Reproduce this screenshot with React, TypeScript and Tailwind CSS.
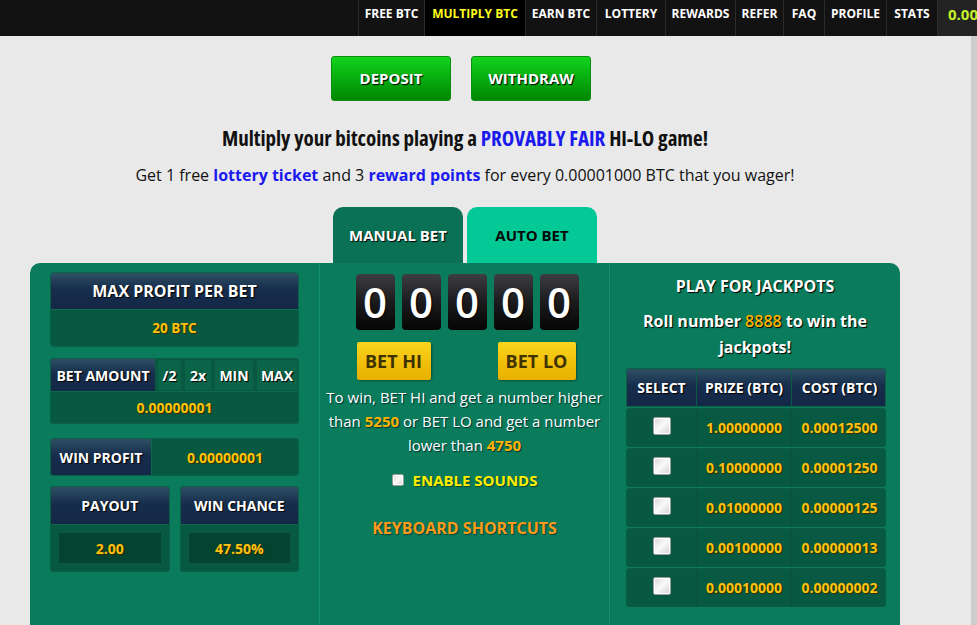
import React from "react";

const navItems = [
  { label: "FREE BTC", w: "w-[66px]", active: false },
  { label: "MULTIPLY BTC", w: "w-[101px]", active: true },
  { label: "EARN BTC", w: "w-[71px]", active: false },
  { label: "LOTTERY", w: "w-[69px]", active: false },
  { label: "REWARDS", w: "w-[70px]", active: false },
  { label: "REFER", w: "w-[48px]", active: false },
  { label: "FAQ", w: "w-[41px]", active: false },
  { label: "PROFILE", w: "w-[62px]", active: false },
  { label: "STATS", w: "w-[51px]", active: false },
];

const jackpots = [
  { prize: "1.00000000", cost: "0.00012500" },
  { prize: "0.10000000", cost: "0.00001250" },
  { prize: "0.01000000", cost: "0.00000125" },
  { prize: "0.00100000", cost: "0.00000013" },
  { prize: "0.00010000", cost: "0.00000002" },
];

const navy =
  "bg-[linear-gradient(to_bottom,#2e5064,#172d4c_45%,#142847)] text-white font-bold [text-shadow:1px_1px_1px_#000]";
const gold = "text-[#ffc20e] font-bold [text-shadow:1px_1px_1px_#3a2a00]";

const TopNav = () => (
  <nav className="flex h-[36px] bg-[#121212] font-['Open_Sans',sans-serif] text-[12px] font-bold">
    <div className="flex-1" />
    {navItems.map((item) => (
      <div
        key={item.label}
        className={`${item.w} flex items-start justify-center border-l border-[#2c2c2c] pt-[5px] ${
          item.active ? "bg-black text-[#ffff1a]" : "text-white"
        }`}
      >
        {item.label}
      </div>
    ))}
    <div className="w-[40px] overflow-hidden whitespace-nowrap border-l border-[#2c2c2c] bg-[#232323] pl-[10px] pt-[3px] text-[15px] text-[#c6f02c]">
      0.00000000
    </div>
  </nav>
);

const GreenButton = ({ children }: { children: React.ReactNode }) => (
  <button className="h-[45px] w-[120px] rounded-[3px] border border-[#0a8f12] bg-[linear-gradient(to_bottom,#12d41c,#07a90e_55%,#008600)] text-[15px] font-bold text-white [text-shadow:1px_1px_1px_#000]">
    {children}
  </button>
);

const Checkbox = ({ size }: { size: string }) => (
  <span
    className={`${size} inline-block rounded-[2px] border border-[#9a9a9a] bg-[linear-gradient(135deg,#d8d8d8,#fafafa_50%,#cfcfcf)] shadow-[inset_0_0_0_1px_#ffffff]`}
  />
);

const LeftColumn = () => (
  <div className="border-r border-[#15906c] px-5 pt-[9px] pb-10">
    {/* max profit */}
    <div className="overflow-hidden rounded-[4px] border border-[#0a5f44]">
      <div className={`${navy} flex h-[36px] items-center justify-center text-[16px]`}>
        MAX PROFIT PER BET
      </div>
      <div className={`${gold} flex h-[37px] items-center justify-center border-t border-[#0c6a4c] bg-[#075a41] text-[13.5px]`}>
        20 BTC
      </div>
    </div>

    {/* bet amount */}
    <div className="mt-[11px] overflow-hidden rounded-[3px] border border-[#0a5f44] bg-[#075a41]">
      <div className="flex h-[32px] gap-[2px] text-[14px]">
        <div className={`${navy} flex w-[104px] items-center justify-center`}>BET AMOUNT</div>
        {["/2", "2x", "MIN", "MAX"].map((b, i) => (
          <div
            key={b}
            className={`flex items-center justify-center border border-[#0a5840] bg-[#0b6448] font-bold text-white [text-shadow:1px_1px_1px_#000] ${
              i === 0 ? "w-[25px]" : i === 1 ? "w-[28px]" : i === 2 ? "w-[40px]" : "flex-1"
            }`}
          >
            {b}
          </div>
        ))}
      </div>
      <div className={`${gold} flex h-[32px] items-center justify-center border-t border-[#0c6a4c] text-[14px]`}>
        0.00000001
      </div>
    </div>

    {/* win profit */}
    <div className="mt-[14px] flex h-[38px] overflow-hidden rounded-[3px] border border-[#0a5f44] text-[14px]">
      <div className={`${navy} flex w-[100px] items-center justify-center`}>WIN PROFIT</div>
      <div className={`${gold} flex flex-1 items-center justify-center border-l border-[#0c6a4c] bg-[#075a41]`}>
        0.00000001
      </div>
    </div>

    {/* payout / win chance */}
    <div className="mt-[10px] grid grid-cols-2 gap-[10px]">
      {[
        { label: "PAYOUT", value: "2.00" },
        { label: "WIN CHANCE", value: "47.50%" },
      ].map((b) => (
        <div key={b.label} className="overflow-hidden rounded-[3px] border border-[#0a5f44] bg-[#075a41]">
          <div className={`${navy} flex h-[38px] items-center justify-center border-b border-[#0c6a4c] text-[14px]`}>
            {b.label}
          </div>
          <div className="p-[7px]">
            <div className={`${gold} flex h-[32px] items-center justify-center rounded-[2px] border border-[#0b5a41] bg-[#04432f] text-[14px]`}>
              {b.value}
            </div>
          </div>
        </div>
      ))}
    </div>
  </div>
);

const MiddleColumn = () => (
  <div className="flex flex-col items-center border-r border-[#15906c] pt-[11px]">
    <div className="flex gap-[7px] pl-[5px]">
      {[0, 1, 2, 3, 4].map((i) => (
        <div
          key={i}
          className="flex h-[56px] w-[39px] items-center justify-center rounded-[4px] bg-[linear-gradient(to_bottom,#3d3e42,#1b1b1d_50%,#050505)] text-[42px] font-semibold leading-none text-white [text-shadow:1px_1px_1px_#000]"
        >
          0
        </div>
      ))}
    </div>
    <div className="mt-[12px] flex w-[222px] justify-between pl-[3px]">
      <button className="h-[38px] w-[74px] rounded-[2px] bg-[linear-gradient(to_bottom,#fad51e,#f0bd08_60%,#e8b000)] text-[18px] font-bold text-[#3d3200] shadow-[1px_1px_2px_rgba(0,0,0,0.35)]">
        BET HI
      </button>
      <button className="h-[38px] w-[78px] rounded-[2px] bg-[linear-gradient(to_bottom,#fad51e,#f0bd08_60%,#e8b000)] text-[18px] font-bold text-[#3d3200] shadow-[1px_1px_2px_rgba(0,0,0,0.35)]">
        BET LO
      </button>
    </div>
    <p className="mt-[5px] px-[6px] text-center text-[15px] leading-[24px] text-white [text-shadow:1px_1px_1px_#033]">
      To win, BET HI and get a number higher than{" "}
      <span className="font-bold text-[#ffb300]">5250</span> or BET LO and get a number lower than{" "}
      <span className="font-bold text-[#ffb300]">4750</span>
    </p>
    <div className="mt-[11px] flex h-[24px] items-center gap-[9px]">
      <Checkbox size="h-[12px] w-[12px]" />
      <span className="text-[15px] font-bold text-[#ffee00] [text-shadow:1px_1px_1px_#043]">ENABLE SOUNDS</span>
    </div>
    <div className="mt-[24px] text-[16px] font-bold text-[#ff9a1a] [text-shadow:1px_1px_1px_#043]">
      KEYBOARD SHORTCUTS
    </div>
  </div>
);

const RightColumn = () => (
  <div className="px-4 pt-[11px] pb-[18px]">
    <div className="text-center text-[16px] font-bold leading-[24px] text-white [text-shadow:1px_1px_1px_#000]">
      PLAY FOR JACKPOTS
    </div>
    <div className="mx-auto mt-[10px] w-[240px] text-center text-[16px] font-bold leading-[26px] text-white [text-shadow:1px_1px_1px_#000]">
      Roll number <span className="font-semibold text-[#ffb300]">8888</span> to win the jackpots!
    </div>
    <div className="mt-[8px] w-[260px]">
      <div className={`${navy} grid h-[39px] grid-cols-[70px_95px_95px] overflow-hidden rounded-t-[3px] border border-[#0a5f44] text-[14px]`}>
        <div className="flex items-center justify-center border-r border-[#0b5a44]">SELECT</div>
        <div className="flex items-center justify-center border-r border-[#0b5a44]">PRIZE (BTC)</div>
        <div className="flex items-center justify-center">COST (BTC)</div>
      </div>
      <div className="mt-[1px] flex flex-col gap-[1px]">
        {jackpots.map((j) => (
          <div
            key={j.prize}
            className="grid h-[39px] grid-cols-[70px_95px_95px] rounded-[3px] border border-[#0a5c43] bg-[#075a41] text-[14px]"
          >
            <div className="flex items-center justify-center border-r border-[#0b5038] pb-[4px]">
              <Checkbox size="h-[18px] w-[18px]" />
            </div>
            <div className={`${gold} flex items-center justify-center border-r border-[#0b5038]`}>{j.prize}</div>
            <div className={`${gold} flex items-center justify-center`}>{j.cost}</div>
          </div>
        ))}
      </div>
    </div>
  </div>
);

export default function App() {
  return (
    <div className="h-[625px] overflow-hidden bg-[#e9e9e9] font-['Open_Sans',sans-serif]">
      <TopNav />
      <div className="flex">
        <main className="flex-1">
          <div className="ml-[30px] w-[870px]">
            <div className="flex justify-center gap-5 pt-5 pr-2">
              <GreenButton>DEPOSIT</GreenButton>
              <GreenButton>WITHDRAW</GreenButton>
            </div>
            <p className="mt-[24px] text-center text-[21px] font-bold leading-[27px] text-[#111] [font-stretch:condensed]">
              Multiply your bitcoins playing a <span className="text-[#1a1aee]">PROVABLY FAIR</span> HI-LO game!
            </p>
            <p className="mt-[10px] text-center text-[16px] leading-[27px] text-[#111]">
              Get 1 free <span className="font-bold text-[#1a1aee]">lottery ticket</span> and 3{" "}
              <span className="font-bold text-[#1a1aee]">reward points</span> for every 0.00001000 BTC that you wager!
            </p>
            <div className="mt-[18px] flex justify-center gap-[4px]">
              <div className="flex h-[56px] w-[130px] items-center justify-center rounded-t-[10px] bg-[#0b7155] text-[15px] font-bold text-white [text-shadow:1px_1px_1px_#000]">
                MANUAL BET
              </div>
              <div className="flex h-[56px] w-[130px] items-center justify-center rounded-t-[10px] bg-[#03c996] text-[15px] font-bold text-[#0a0a0a]">
                AUTO BET
              </div>
            </div>
            <div className="grid grid-cols-3 rounded-t-[10px] bg-[#0a7b5b]">
              <LeftColumn />
              <MiddleColumn />
              <RightColumn />
            </div>
          </div>
        </main>
        <div className="h-[600px] w-[6px] bg-[#cdcdcd]" />
      </div>
    </div>
  );
}
